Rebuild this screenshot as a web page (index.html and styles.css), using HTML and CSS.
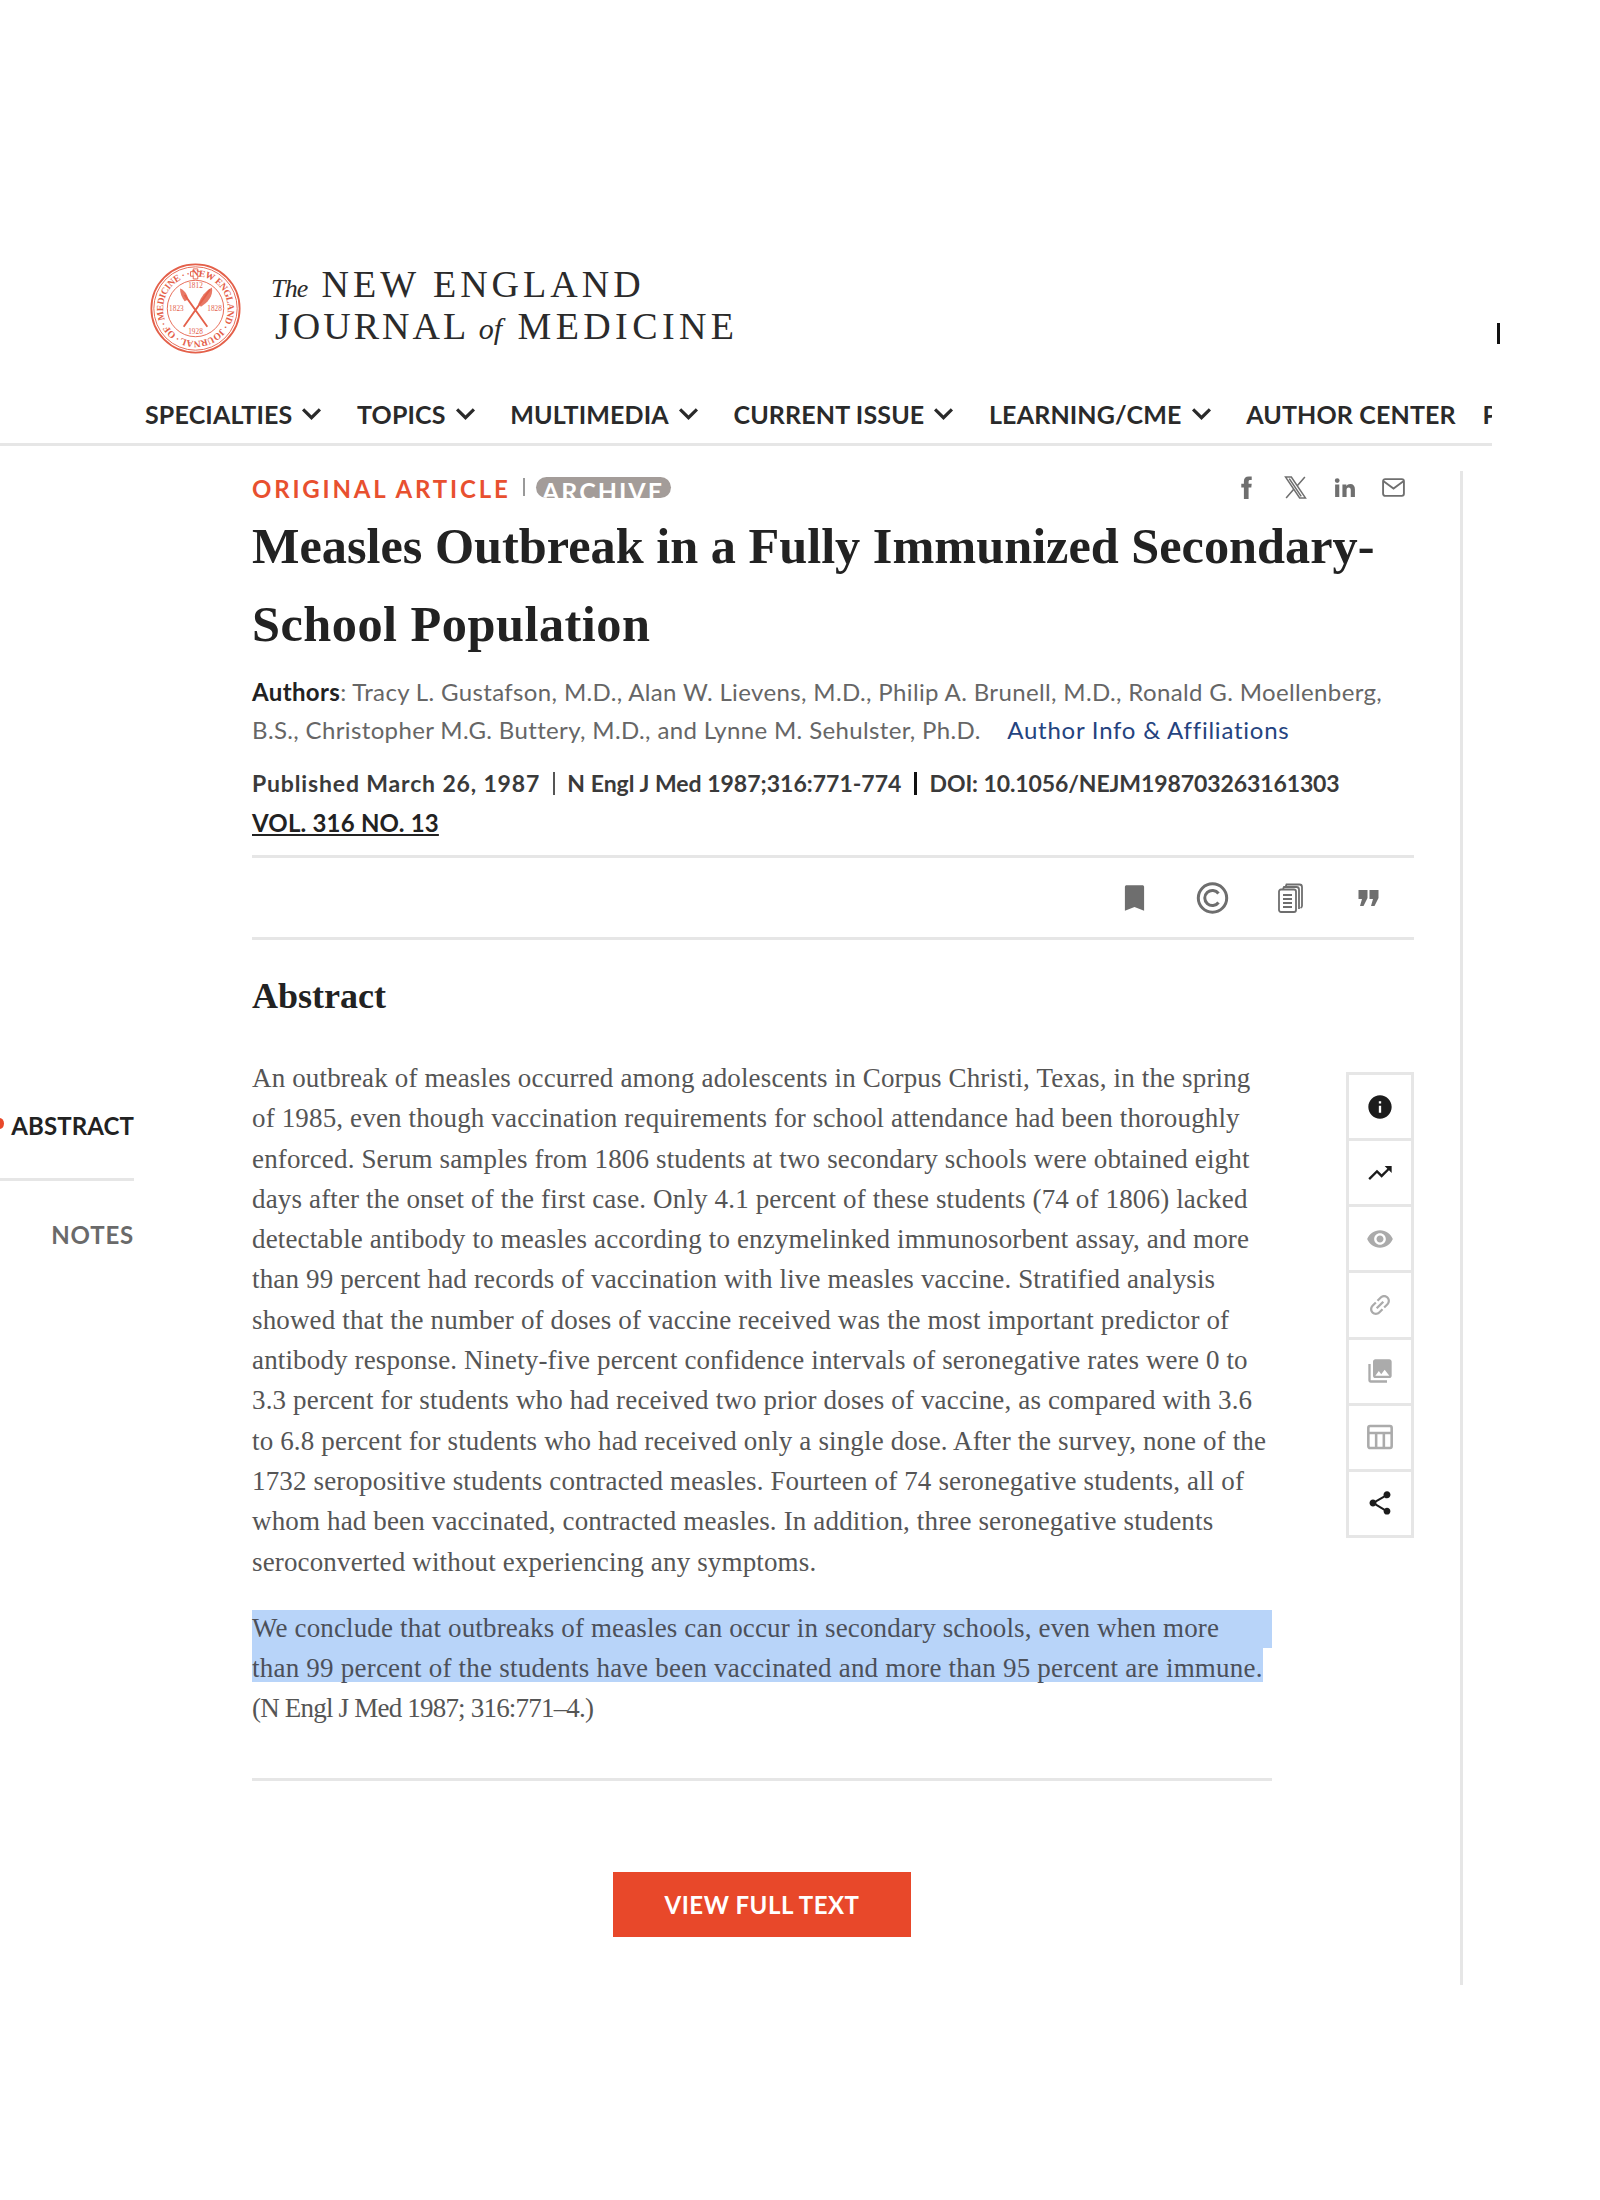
FILE: index.html
```html
<!DOCTYPE html>
<html lang="en">
<head>
  <meta charset="UTF-8">
  <title>Measles Outbreak in a Fully Immunized Secondary-School Population</title>
  <meta name="viewport" content="width=device-width, initial-scale=1">
  <link rel="stylesheet" href="styles.css">
</head>
<body>
  <header class="masthead">
    <svg class="seal" viewBox="0 0 100 100" aria-hidden="true">
      <defs>
        <path id="seal-arc" d="M50 50 m-35.500 0 a35.500 35.500 0 1 1 71 0 a35.500 35.500 0 1 1 -71 0"/>
      </defs>
      <circle cx="50" cy="50" r="48.500" class="seal-line"/>
      <circle cx="50" cy="50" r="45.800" class="seal-thin"/>
      <circle cx="50" cy="50" r="31" class="seal-thin"/>
      <text class="seal-ring" transform="rotate(-20 50 50)"><textPath href="#seal-arc" textLength="221">MEDICINE · · NEW ENGLAND · JOURNAL · OF ·</textPath></text>
      <path class="seal-thin" d="M47.500 6.500h5v3h3v5h-3v3h-5v-3h-3v-5h3z"/>
      <path class="seal-line" d="M38 35 L63 70 M66 29 L37 70"/>
      <path class="seal-fill" d="M68 27 C70 36 63 44 56 48 L53 45 C56 37 61 31 68 27z"/>
      <path class="seal-fill" d="M33 28 C37 29 41 34 42 40 L38 42 C35 38 33 33 33 28z"/>
      <text class="seal-year" x="50" y="28">1812</text>
      <text class="seal-year" x="29" y="53">1823</text>
      <text class="seal-year" x="71" y="53">1828</text>
      <text class="seal-year" x="50" y="78">1928</text>
    </svg>
    <div class="wordmark">
      <div class="wordmark-line"><i class="wordmark-small">The</i>NEW ENGLAND</div>
      <div class="wordmark-line wordmark-line-2"><span class="wordmark-journal">JOURNAL</span> <i class="wordmark-of">of</i> <span class="wordmark-medicine">MEDICINE</span></div>
    </div>
    <span class="caret"></span>
  </header>

  <nav class="nav">
    <a class="nav-item">SPECIALTIES <svg class="chev" viewBox="0 0 20 12"><path d="M2 2l8 8 8-8"/></svg></a>
    <a class="nav-item">TOPICS <svg class="chev" viewBox="0 0 20 12"><path d="M2 2l8 8 8-8"/></svg></a>
    <a class="nav-item">MULTIMEDIA <svg class="chev" viewBox="0 0 20 12"><path d="M2 2l8 8 8-8"/></svg></a>
    <a class="nav-item">CURRENT ISSUE <svg class="chev" viewBox="0 0 20 12"><path d="M2 2l8 8 8-8"/></svg></a>
    <a class="nav-item">LEARNING/CME <svg class="chev" viewBox="0 0 20 12"><path d="M2 2l8 8 8-8"/></svg></a>
    <a class="nav-item">AUTHOR CENTER</a>
    <a class="nav-item nav-last">PUBLICATIONS</a>
  </nav>

  <div class="main">
    <aside class="side">
      <a class="side-link side-active"><span class="side-dot"></span>ABSTRACT</a>
      <a class="side-link side-notes">NOTES</a>
    </aside>

    <article class="article">
      <div class="kicker-row">
        <span class="kicker">ORIGINAL ARTICLE</span>
        <span class="kicker-tick"></span>
        <span class="badge"><span>ARCHIVE</span></span>
        <div class="social">
          <svg viewBox="0 0 24 24" class="soc-fb"><path d="M14 8.500V6.300c0-1 .5-1.500 1.500-1.500H17V1.500h-2.800C11 1.500 9.500 3.500 9.500 6v2.500H7V12h2.500v11H14V12h2.600l.4-3.500z"/></svg>
          <svg viewBox="0 0 24 24" class="soc-x"><path d="M2.500 2h5.500l13.500 20h-5.500zM6 3.500l11.500 17M21 2l-7.500 8.500M10.500 13.500L3 22"/></svg>
          <svg viewBox="0 0 24 24" class="soc-in"><path d="M3 9h4v12H3zM5 3a2.300 2.300 0 1 1 0 4.600A2.300 2.300 0 0 1 5 3zM10 9h3.800v1.700C14.500 9.500 16 8.700 17.500 8.700c3 0 4.500 2 4.500 5V21h-4v-6.500c0-1.500-.6-2.500-2-2.500s-2 1.100-2 2.500V21h-4z"/></svg>
          <svg viewBox="0 0 24 24" class="soc-mail"><rect x="2" y="4" width="20" height="16" rx="2"/><path d="M2.500 6l9.500 7 9.500-7"/></svg>
        </div>
      </div>

      <h1 class="title">Measles Outbreak in a Fully Immunized Secondary-<br><span class="title-second">School Population</span></h1>

      <p class="authors"><b>Authors</b>: Tracy L. Gustafson, M.D., Alan W. Lievens, M.D., Philip A. Brunell, M.D., Ronald G. Moellenberg,<br>B.S., Christopher M.G. Buttery, M.D., and Lynne M. Sehulster, Ph.D. <a class="authors-link">Author Info &amp; Affiliations</a></p>

      <p class="pubinfo"><span class="pub-date">Published March 26, 1987</span> <span class="pipe"></span> N Engl J Med 1987;316:771-774 <span class="pipe pipe-dark"></span> <span class="pub-doi">DOI: 10.1056/NEJM198703263161303</span></p>
      <p class="volume"><a>VOL. 316 NO. 13</a></p>

      <div class="tools">
        <svg viewBox="-3 -1 30 30" class="tool"><path class="tool-fill" d="M3 3.500C3 2.500 3.800 2 4.500 2h15c.7 0 1.500.5 1.500 1.500V26l-9-3.500L3 26z"/></svg>
        <svg viewBox="0 0 32 32" class="tool"><circle cx="16" cy="16" r="14.200" class="tool-stroke"/><path class="tool-stroke" d="M22 11.500A7.600 7.600 0 1 0 22 20.500"/></svg>
        <svg viewBox="0 0 28 32" class="tool"><path class="tool-thin" d="M9 5l1-2.500h13c1.500 0 2.500 1 2.500 2.500v19c0 1-.5 1.500-1.500 2M6.500 7l1-2h12.500c1.500 0 2.500 1 2.500 2.500V27"/><rect x="2.500" y="7.500" width="17" height="22.500" rx="2" class="tool-paper"/><path class="tool-thin" d="M6.500 13h9M6.500 17h9M6.500 21h9M6.500 25h9"/></svg>
        <svg viewBox="-4 -4 32 32" class="tool"><path class="tool-fill" d="M2 4h9v8l-4 8H3.500l2-7H2zM13 4h9v8l-4 8h-3.500l2-7H13z"/></svg>
      </div>

      <h2 class="abstract-head">Abstract</h2>

      <div class="abstract-row">
        <div class="abstract-text">
          <p class="abstract-para">An outbreak of measles occurred among adolescents in Corpus Christi, Texas, in the spring<br>of 1985, even though vaccination requirements for school attendance had been thoroughly<br>enforced. Serum samples from 1806 students at two secondary schools were obtained eight<br>days after the onset of the first case. Only 4.1 percent of these students (74 of 1806) lacked<br>detectable antibody to measles according to enzymelinked immunosorbent assay, and more<br>than 99 percent had records of vaccination with live measles vaccine. Stratified analysis<br>showed that the number of doses of vaccine received was the most important predictor of<br>antibody response. Ninety-five percent confidence intervals of seronegative rates were 0 to<br>3.3 percent for students who had received two prior doses of vaccine, as compared with 3.6<br>to 6.8 percent for students who had received only a single dose. After the survey, none of the<br>1732 seropositive students contracted measles. Fourteen of 74 seronegative students, all of<br>whom had been vaccinated, contracted measles. In addition, three seronegative students<br>seroconverted without experiencing any symptoms.</p>
          <div class="abstract-para abstract-last">
            <div class="sel sel-first">We conclude that outbreaks of measles can occur in secondary schools, even when more</div>
            <div class="sel sel-last">than 99 percent of the students have been vaccinated and more than 95 percent are immune.</div>
            <div class="cite">(N Engl J Med 1987; 316:771–4.)</div>
          </div>
          <div class="abstract-rule"></div>
          <a class="cta">VIEW FULL TEXT</a>
        </div>

        <div class="rail">
          <div class="rail-cell"><svg viewBox="0 0 24 24" class="rail-dark"><path d="M12 2C6.480 2 2 6.480 2 12s4.480 10 10 10 10-4.480 10-10S17.520 2 12 2zm1 15h-2v-6h2v6zm0-8h-2V7h2v2z"/></svg></div>
          <div class="rail-cell"><svg viewBox="0 0 24 24" class="rail-dark"><path d="M16 6l2.290 2.290-4.880 4.880-4-4L2 16.590 3.410 18l6-6 4 4 6.300-6.290L22 12V6z"/></svg></div>
          <div class="rail-cell"><svg viewBox="0 0 24 24" class="rail-grey"><path d="M12 4.500C7 4.500 2.730 7.610 1 12c1.730 4.390 6 7.500 11 7.500s9.270-3.110 11-7.500c-1.730-4.390-6-7.500-11-7.500zM12 17c-2.760 0-5-2.240-5-5s2.240-5 5-5 5 2.240 5 5-2.240 5-5 5zm0-8c-1.660 0-3 1.340-3 3s1.340 3 3 3 3-1.340 3-3-1.340-3-3-3z"/></svg></div>
          <div class="rail-cell"><svg viewBox="0 0 24 24" class="rail-grey rail-link"><path d="M3.900 12c0-1.710 1.390-3.100 3.100-3.100h4V7H7c-2.760 0-5 2.240-5 5s2.240 5 5 5h4v-1.900H7c-1.710 0-3.100-1.390-3.100-3.100zM8 13h8v-2H8v2zm9-6h-4v1.900h4c1.710 0 3.100 1.390 3.100 3.100s-1.390 3.100-3.100 3.100h-4V17h4c2.760 0 5-2.240 5-5s-2.240-5-5-5z"/></svg></div>
          <div class="rail-cell"><svg viewBox="0 0 24 24" class="rail-grey"><path d="M22 16V4c0-1.100-.9-2-2-2H8c-1.100 0-2 .9-2 2v12c0 1.100.9 2 2 2h12c1.100 0 2-.9 2-2zm-11-4l2.030 2.710L16 11l4 5H8l3-4zM2 6v14c0 1.100.9 2 2 2h14v-2H4V6H2z"/></svg></div>
          <div class="rail-cell"><svg viewBox="0 0 24 24" class="rail-table"><rect x="2" y="2.500" width="20" height="19" rx="1.500"/><path d="M2 8.500h20M8.700 8.500v13M15.300 8.500v13"/></svg></div>
          <div class="rail-cell"><svg viewBox="0 0 24 24" class="rail-dark"><path d="M18 16.080c-.76 0-1.440.3-1.960.77L8.910 12.700c.05-.23.09-.46.09-.7s-.04-.47-.09-.7l7.050-4.110c.54.5 1.250.81 2.040.81 1.660 0 3-1.340 3-3s-1.340-3-3-3-3 1.340-3 3c0 .24.04.47.09.7L8.040 9.810C7.500 9.310 6.790 9 6 9c-1.660 0-3 1.340-3 3s1.340 3 3 3c.79 0 1.500-.31 2.040-.81l7.120 4.160c-.05.21-.08.43-.08.65 0 1.610 1.310 2.920 2.920 2.920 1.610 0 2.920-1.310 2.920-2.920s-1.310-2.920-2.920-2.920z"/></svg></div>
        </div>
      </div>
    </article>

    <div class="vrule"></div>
  </div>
</body>
</html>
```

FILE: styles.css
```css
html, body { margin: 0; padding: 0; background: #fff; }
body { font-family: "Lato", "Liberation Sans", sans-serif; color: #222; width: 1600px; overflow-x: hidden; }
p { margin: 0; }

/* masthead */
.masthead { display: flex; align-items: flex-start; padding: 262px 0 0 150px; height: 117px; position: relative; }
.seal { width: 91px; height: 93px; flex: none; }
.seal-line { fill: none; stroke: #e4604a; stroke-width: 2; }
.seal-thin { fill: none; stroke: #e4604a; stroke-width: 1; }
.seal-fill { fill: #e4604a; opacity: .85; }
.seal-ring { font-family: "Liberation Serif", serif; font-size: 10.500px; font-weight: 700; fill: #e4604a; }
.seal-year { font-family: "Liberation Serif", serif; font-size: 8px; fill: #e4604a; text-anchor: middle; }
.wordmark { margin: 0 0 0 30px; padding-top: 1px; font-family: "Liberation Serif", serif; font-size: 38px; line-height: 42px; letter-spacing: 4px; color: #2b2b2b; white-space: nowrap; }
.wordmark i { line-height: 1; }
.wordmark-small { font-size: 26px; letter-spacing: -.8px; margin-right: 14px; }
.wordmark-of { font-size: 30px; letter-spacing: 0; margin: 0 2px 0 -4px; }
.wordmark-line-2 { padding-left: 4px; }
.wordmark-journal { letter-spacing: 3px; }
.wordmark-medicine { letter-spacing: 4.400px; }
.caret { position: absolute; left: 1497px; top: 323px; width: 3px; height: 21px; background: #111; }

/* nav */
.nav { display: flex; gap: 34.600px; width: 1347px; height: 59px; padding: 5px 0 0 145px; overflow: hidden; border-bottom: 3px solid #e6e6e6; align-items: center; white-space: nowrap; }
.nav-item { font-size: 25px; font-weight: 700; letter-spacing: .15px; color: #2a2a2a; display: flex; align-items: center; gap: 9px; flex: none; }
.nav-last { margin-left: -8px; }
.chev { width: 21px; height: 13px; fill: none; stroke: #2a2a2a; stroke-width: 3; }

/* main row */
.main { display: flex; align-items: stretch; padding-top: 25px; height: 1514px; }
.side { width: 134px; flex: none; padding-top: 635px; text-align: right; }
.side-link { display: block; font-size: 24px; font-weight: 700; line-height: 40px; position: relative; }
.side-active { color: #222; padding-bottom: 32px; border-bottom: 3px solid #e6e6e6; letter-spacing: .1px; }
.side-notes { color: #6a6a6a; margin-top: 34px; letter-spacing: .8px; }
.side-dot { position: absolute; left: -5px; top: 12px; width: 9px; height: 11px; border-radius: 50%; background: #e8482a; }
.article { width: 1162px; flex: none; margin-left: 118px; }
.vrule { width: 3px; background: #e6e6e6; margin-left: 46px; }

/* top of article */
.kicker-row { display: flex; align-items: center; height: 30px; padding-top: 1px; }
.kicker { font-size: 24px; font-weight: 700; letter-spacing: 2.800px; color: #e8502f; padding-top: 2px; }
.kicker-tick { width: 2px; height: 18px; background: #999; margin: 0 11px 0 12px; }
.badge { width: 135px; height: 21px; border-radius: 11px; background: #a39c99; color: #fff; overflow: hidden; text-align: center; font-size: 25px; font-weight: 700; letter-spacing: 2px; line-height: 28px; }
.social { margin-left: auto; display: flex; gap: 24px; padding-right: 8px; }
.social svg { width: 25px; height: 25px; }
.soc-fb, .soc-in { fill: #6f6f6f; }
.soc-x { fill: none; stroke: #6f6f6f; stroke-width: 1.500; }
.soc-mail { fill: none; stroke: #6f6f6f; stroke-width: 1.800; }

.title { margin: 5px 0 0; font-family: "Liberation Serif", serif; font-size: 50.300px; font-weight: 700; line-height: 78px; color: #222; white-space: nowrap; }
.title-second { letter-spacing: .5px; }
.authors { margin-top: 10px; font-size: 24px; line-height: 38px; color: #666; white-space: nowrap; letter-spacing: .36px; }
.authors b { color: #222; }
.authors-link { color: #24437f; margin-left: 20px; letter-spacing: .76px; }
.pubinfo { margin-top: 15px; font-size: 23px; line-height: 38px; font-weight: 700; color: #3a3a3a; white-space: nowrap; }
.pub-date { letter-spacing: .85px; }
.pub-doi { letter-spacing: -.1px; }
.pipe { display: inline-block; width: 2px; height: 23px; background: #555; margin: 0 7px; vertical-align: -3px; }
.pipe-dark { width: 3px; background: #111; }
.volume { font-size: 24px; line-height: 42px; font-weight: 700; letter-spacing: .2px; color: #222; padding-bottom: 11px; border-bottom: 3px solid #e6e6e6; }
.volume a { text-decoration: underline; }

.tools { display: flex; justify-content: flex-end; align-items: center; gap: 45px; height: 79px; padding-right: 29px; border-bottom: 3px solid #e6e6e6; }
.tool { width: 33px; height: 32px; }
.tool-fill { fill: #6e6e6e; }
.tool-stroke { fill: none; stroke: #6e6e6e; stroke-width: 3; }
.tool-thin { fill: none; stroke: #6e6e6e; stroke-width: 1.800; }
.tool-paper { fill: #fff; stroke: #6e6e6e; stroke-width: 1.800; }

/* abstract */
.abstract-head { margin: 34px 0 0; font-family: "Liberation Serif", serif; font-size: 36px; font-weight: 700; line-height: 44px; color: #222; }
.abstract-row { display: flex; margin-top: 40px; }
.abstract-text { width: 1020px; flex: none; }
.abstract-para { font-family: "Liberation Serif", serif; font-size: 27px; line-height: 40.300px; color: #555; white-space: nowrap; letter-spacing: .15px; }
.abstract-last { margin-top: 26px; }
.sel { color: #4c5059; }
.sel-first { background: linear-gradient(transparent 2px, #b8d4f9 2px); }
.sel-last { width: fit-content; letter-spacing: .22px; background: linear-gradient(#b8d4f9 34px, transparent 34px); }
.cite { letter-spacing: -.8px; }
.abstract-rule { height: 3px; background: #e6e6e6; margin-top: 49px; }
.cta { display: block; width: 298px; height: 65px; margin: 91px auto 0; background: #e8482a; color: #fff; text-align: center; font-size: 24px; font-weight: 700; line-height: 65px; letter-spacing: .5px; }

/* icon rail */
.rail { width: 68px; height: 466px; margin-left: 74px; margin-top: 14px; flex: none; border: 3px solid #e6e6e6; box-sizing: border-box; display: flex; flex-direction: column; }
.rail-cell { flex: 1; display: flex; align-items: center; justify-content: center; border-bottom: 3px solid #e6e6e6; }
.rail-cell:last-child { border-bottom: 0; }
.rail-cell svg { width: 28px; height: 28px; }
.rail-dark { fill: #1c1c1c; }
.rail-grey { fill: #ababab; }
.rail-link { transform: rotate(-45deg); }
.rail-table { fill: none; stroke: #ababab; stroke-width: 2.200; }
```
